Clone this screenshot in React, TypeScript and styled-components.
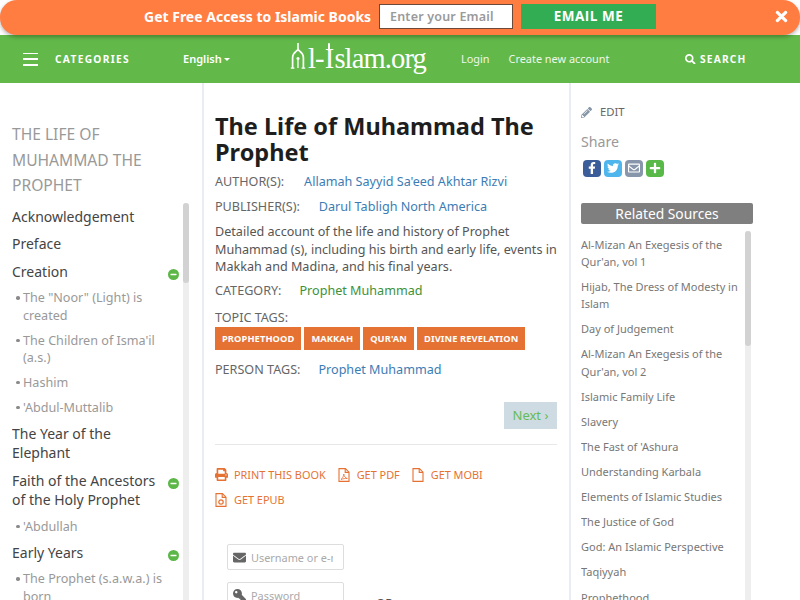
import React from "react";
import styled, { createGlobalStyle } from "styled-components";
import { FaPrint, FaEnvelope, FaKey, FaPencilAlt, FaSearch, FaFacebookF, FaTwitter, FaRegEnvelope, FaPlus, FaMinus, FaTimes } from "react-icons/fa";

const Global = createGlobalStyle`
  html, body { margin: 0; padding: 0; height: 600px; overflow: hidden; background: #fff; }
  body { font-family: "Noto Sans", "Open Sans", sans-serif; color: #555; }
  * { box-sizing: border-box; }
  a { text-decoration: none; color: inherit; }
`;

const Page = styled.div`width: 800px; height: 600px; overflow: hidden; display: flex; flex-direction: column;`;

const Banner = styled.div`
  position: relative; z-index: 2; height: 35px; flex: none; background: #ff7d41; border-radius: 17px;
  box-shadow: 0 2px 4px rgba(0,0,0,.3); display: flex; align-items: center; padding-left: 144px;
`;
const BannerText = styled.span`font-size: 14px; font-weight: 700; color: #fff; width: 235px; white-space: nowrap; line-height: 1; margin-top: -1px;`;
const EmailInput = styled.div`
  width: 134px; height: 25px; background: #fff; border: 1px solid #6b4a3a; margin-top: -2px;
  font-size: 12.5px; font-weight: 600; color: #9a9a9a; padding-left: 10px; line-height: 23px; letter-spacing: .2px; white-space: nowrap;
`;
const EmailButton = styled.div`
  width: 135px; height: 25px; margin: -2px 0 0 8px; background: #33ad54; color: #fff; font-family: "Open Sans", sans-serif;
  font-size: 13.5px; font-weight: 700; text-align: center; line-height: 24px; letter-spacing: .5px;
`;
const Close = styled.span`position: absolute; right: 10px; top: 8px; color: #fff; font-size: 17px; line-height: 1; display: flex;`;

const Nav = styled.div`height: 48px; flex: none; background: #62b94a; display: flex; align-items: center; color: #fff;`;
const Burger = styled.div`width: 15px; height: 13px; margin: 0 17px 0 23px; display: flex; flex-direction: column; justify-content: space-between;
  i { display: block; height: 1.6px; background: #fff; }`;
const Categories = styled.span`font-size: 10.2px; font-weight: 700; letter-spacing: 1.3px; width: 128px; margin-top: -1px;`;
const Lang = styled.span`font-size: 11px; font-weight: 600; width: 106px; margin-top: -1px;
  &::after { content: ""; display: inline-block; margin-left: 2px; vertical-align: 2px; border-left: 3px solid transparent; border-right: 3px solid transparent; border-top: 3px solid #fff; }`;
const Logo = styled.span`font-family: "Liberation Serif", serif; font-size: 28.5px; width: 172px; letter-spacing: -.85px; line-height: 1; white-space: nowrap; display: inline-flex;`;
const LogoA = styled.span`position: relative; color: transparent; width: 19px; svg { position: absolute; left: 1px; top: -2px; }`;
const LogoI = styled.span`position: relative; margin: 0 1px;
  &::before { content: ""; position: absolute; left: 3px; top: -2px; width: 2.4px; height: 8px; border-radius: 1px; background: #fff; }`;
const NavLink = styled.span`font-size: 10.9px; color: #eef7ea; margin-right: 19px; margin-top: -1px; white-space: nowrap;`;
const Search = styled.span`margin-left: 57px; display: flex; align-items: center; gap: 4px; font-size: 10.2px; font-weight: 700; letter-spacing: 1.2px; svg { font-size: 10.5px; }`;

const Body = styled.div`flex: 1; display: flex; min-height: 0;`;

const Left = styled.aside`width: 204px; flex: none; border-right: 2px solid #e9ecf2; padding: 39px 0 0 12px; overflow: hidden;`;
const BookTitle = styled.div`font-size: 15.6px; line-height: 25.6px; color: #999; text-transform: uppercase; width: 170px; margin-bottom: 3.8px;`;
const ScrollArea = styled.div`position: relative; height: 420px; overflow: hidden; width: 177px;`;
const Track = styled.div<{ $h: number }>`
  position: absolute; right: 0; top: 0; bottom: 0; width: 6px; background: #eee; border-radius: 3px 3px 0 0;
  &::before { content: ""; position: absolute; left: 0; right: 0; top: 0; height: ${p => p.$h}px; background: #d2d2d2; border-radius: 3px; }
`;
const Chapter = styled.div`position: relative; font-size: 14px; line-height: 19.6px; color: #444; width: 150px; padding: 4px 0 3.9px;`;
const Minus = styled.span`position: absolute; left: 156px; top: 11px; width: 11px; height: 11px; border-radius: 50%; background: #5cb748; color: #fff; display: flex; align-items: center; justify-content: center; font-size: 7px;`;
const SubList = styled.ul`list-style: none; margin: 0; padding: 0 0 0 11px; width: 160px;`;
const SubItem = styled.li`position: relative; font-size: 12.6px; line-height: 17.64px; color: #999; padding: 4px 0 3.2px;
  &::before { content: ""; position: absolute; left: -7px; top: 11px; width: 3.5px; height: 3.5px; border-radius: 50%; background: #8a8a8a; }`;

const Main = styled.main`width: 367px; flex: none; border-right: 2px solid #e9ecf2; padding: 31px 12px 0 11px; overflow: hidden;`;
const H1 = styled.h1`font-size: 23.5px; line-height: 25.5px; font-weight: 700; color: #1e1e1e; margin: 0 0 4px;`;
const Meta = styled.div<{ $gap: number }>`font-size: 12.6px; line-height: 25px; color: #666; white-space: nowrap; display: flex; gap: ${p => p.$gap}px;`;
const BlueLink = styled.a`color: #3c7cb4;`;
const GreenLink = styled.a`color: #3d9138;`;
const Desc = styled.p`font-size: 12.6px; line-height: 17.64px; color: #555; margin: 4px 0 1.7px;`;
const TagLabel = styled.div`font-size: 12.6px; line-height: 18px; color: #666; margin-top: 6.5px;`;
const Tags = styled.div`display: flex; gap: 3px; margin-bottom: 6.5px;`;
const Tag = styled.span`height: 23px; padding: 0 7px; background: #e57232; color: #fff; font-size: 9.3px; font-weight: 700; line-height: 23px; letter-spacing: .1px; white-space: nowrap;`;
const NextRow = styled.div`display: flex; justify-content: flex-end; margin-top: 20.5px;`;
const Next = styled.span`width: 53px; height: 26.5px; background: #cfdbe3; color: #66bb55; font-size: 13px; line-height: 26px; text-align: center;`;
const Rule = styled.hr`border: 0; border-top: 1px solid #e8e8e8; margin: 15.5px 0 20.5px;`;
const Actions = styled.div`display: flex; flex-wrap: wrap; column-gap: 12px; row-gap: 7.5px;`;
const Action = styled.a`display: flex; align-items: center; gap: 6px; font-size: 10.9px; line-height: 18px; color: #e57232; white-space: nowrap; svg { font-size: 13px; flex: none; }`;
const Form = styled.div`display: flex; margin: 35px 0 0 12px;`;
const Fields = styled.div`width: 117px; flex: none; display: flex; flex-direction: column; gap: 12px;`;
const Field = styled.div`height: 26px; border: 1px solid #ddd; border-radius: 2px; display: flex; align-items: center; padding: 0 10px 0 5px; gap: 5px; font-size: 10.9px; color: #aaa; white-space: nowrap; svg { color: #666; font-size: 13px; flex: none; }`;
const FieldText = styled.span`flex: 1; min-width: 0; overflow: hidden;`;
const KeyIcon = styled(FaKey)`transform: scaleX(-1);`;
const Or = styled.span`font-size: 12px; line-height: 16px; color: #555; margin: 52px 0 0 32px;`;

const Right = styled.aside`flex: 1; padding: 20px 0 0 10px; overflow: hidden;`;
const Edit = styled.div`display: flex; align-items: center; gap: 8px; font-size: 11.3px; color: #666; line-height: 18px; svg { color: #8496a8; font-size: 11px; }`;
const ShareTitle = styled.div`font-size: 14.2px; color: #999; line-height: 20px; margin-top: 11px;`;
const ShareRow = styled.div`display: flex; gap: 3.5px; margin: 7.5px 0 0 2px;`;
const ShareBtn = styled.span<{ $c: string }>`width: 17.5px; height: 17.5px; border-radius: 4px; background: ${p => p.$c}; color: #fff; display: flex; align-items: center; justify-content: center; font-size: 12px;`;
const RelatedHead = styled.div`width: 172px; height: 21px; margin-top: 25.5px; background: #7f7f7f; border-radius: 2px; color: #fff; text-align: center; font-size: 13.8px; line-height: 21px;`;
const RelatedArea = styled.div`position: relative; width: 170px; height: 369px; margin-top: 7px; padding-top: 5px; overflow: hidden;`;
const RelatedItem = styled.div`font-size: 11px; line-height: 17.3px; color: #777; width: 160px; padding-bottom: 7.8px;`;
const FileSvg = styled.svg`margin-right: 1px;`;

const FileIcon = ({ children }: { children?: React.ReactNode }) => (
  <FileSvg width="12" height="14" viewBox="0 0 12 14" fill="none" stroke="currentColor" strokeWidth="1.1">
    <path d="M1 .6h6.4L11 4.2v9.2H1z" />
    <path d="M7.2.8v3.6H11" />
    {children}
  </FileSvg>
);

const related = ["Al-Mizan An Exegesis of the Qur'an, vol 1","Hijab, The Dress of Modesty in Islam","Day of Judgement","Al-Mizan An Exegesis of the Qur'an, vol 2","Islamic Family Life","Slavery","The Fast of 'Ashura","Understanding Karbala","Elements of Islamic Studies","The Justice of God","God: An Islamic Perspective","Taqiyyah","Prophethood"];

export default function App() {
  return (
    <Page>
      <Global />
      <Banner>
        <BannerText>Get Free Access to Islamic Books</BannerText>
        <EmailInput>Enter your Email</EmailInput>
        <EmailButton>EMAIL ME</EmailButton>
        <Close><FaTimes /></Close>
      </Banner>
      <Nav>
        <Burger><i /><i /><i /></Burger>
        <Categories>CATEGORIES</Categories>
        <Lang>English</Lang>
        <Logo>
          <LogoA>A
            <svg width="16" height="27" viewBox="0 0 16 27" fill="none" stroke="#fff">
              <path d="M8 0v6" strokeWidth="1.6" />
              <path d="M2.600 25V14.500C2.600 10 6 9 8 6.500c2 2.500 5.400 3.500 5.400 8V25" strokeWidth="1.700" />
              <path d="M.8 25.200h3.600M11.600 25.200h3.600" strokeWidth="1.200" />
              <circle cx="8" cy="15.500" r="1.500" fill="#fff" stroke="none" />
              <path d="M8 17v8" strokeWidth="1.300" />
            </svg>
          </LogoA>
          l-<LogoI>I</LogoI>slam.org
        </Logo>
        <NavLink>Login</NavLink>
        <NavLink>Create new account</NavLink>
        <Search><FaSearch />SEARCH</Search>
      </Nav>
      <Body>
        <Left>
          <BookTitle>The Life of Muhammad The Prophet</BookTitle>
          <ScrollArea>
            <Chapter>Acknowledgement</Chapter>
            <Chapter>Preface</Chapter>
            <Chapter>Creation<Minus><FaMinus /></Minus></Chapter>
            <SubList>
              <SubItem>The "Noor" (Light) is created</SubItem>
              <SubItem>The Children of Isma'il (a.s.)</SubItem>
              <SubItem>Hashim</SubItem>
              <SubItem>'Abdul-Muttalib</SubItem>
            </SubList>
            <Chapter>The Year of the Elephant</Chapter>
            <Chapter>Faith of the Ancestors of the Holy Prophet<Minus><FaMinus /></Minus></Chapter>
            <SubList><SubItem>'Abdullah</SubItem></SubList>
            <Chapter>Early Years<Minus><FaMinus /></Minus></Chapter>
            <SubList><SubItem>The Prophet (s.a.w.a.) is born</SubItem></SubList>
            <Track $h={80} />
          </ScrollArea>
        </Left>
        <Main>
          <H1>The Life of Muhammad The Prophet</H1>
          <Meta $gap={20}><span>AUTHOR(S):</span><BlueLink>Allamah Sayyid Sa'eed Akhtar Rizvi</BlueLink></Meta>
          <Meta $gap={19}><span>PUBLISHER(S):</span><BlueLink>Darul Tabligh North America</BlueLink></Meta>
          <Desc>Detailed account of the life and history of Prophet Muhammad (s), including his birth and early life, events in Makkah and Madina, and his final years.</Desc>
          <Meta $gap={18}><span>CATEGORY:</span><GreenLink>Prophet Muhammad</GreenLink></Meta>
          <TagLabel>TOPIC TAGS:</TagLabel>
          <Tags><Tag>PROPHETHOOD</Tag><Tag>MAKKAH</Tag><Tag>QUR'AN</Tag><Tag>DIVINE REVELATION</Tag></Tags>
          <Meta $gap={18}><span>PERSON TAGS:</span><BlueLink>Prophet Muhammad</BlueLink></Meta>
          <NextRow><Next>Next ›</Next></NextRow>
          <Rule />
          <Actions>
            <Action><FaPrint />PRINT THIS BOOK</Action>
            <Action><FileIcon><path d="M3 11.500c1.500-1 2.500-3 2.800-5.500.4 2.500 1.500 4 3.500 4.500-2-.2-4.500.2-6.300 1z" strokeWidth=".8" /></FileIcon>GET PDF</Action>
            <Action><FileIcon />GET MOBI</Action>
            <Action><FileIcon><circle cx="6" cy="9" r="2.200" strokeWidth="1.200" /></FileIcon>GET EPUB</Action>
          </Actions>
          <Form>
            <Fields>
              <Field><FaEnvelope /><FieldText>Username or e-mail</FieldText></Field>
              <Field><KeyIcon /><FieldText>Password</FieldText></Field>
            </Fields>
            <Or>OR</Or>
          </Form>
        </Main>
        <Right>
          <Edit><FaPencilAlt />EDIT</Edit>
          <ShareTitle>Share</ShareTitle>
          <ShareRow>
            <ShareBtn $c="#3b5e9b"><FaFacebookF /></ShareBtn>
            <ShareBtn $c="#4eb6ec"><FaTwitter /></ShareBtn>
            <ShareBtn $c="#8796aa"><FaRegEnvelope /></ShareBtn>
            <ShareBtn $c="#58b948"><FaPlus /></ShareBtn>
          </ShareRow>
          <RelatedHead>Related Sources</RelatedHead>
          <RelatedArea>
            {related.map(r => <RelatedItem key={r}>{r}</RelatedItem>)}
            <Track $h={115} />
          </RelatedArea>
        </Right>
      </Body>
    </Page>
  );
}
